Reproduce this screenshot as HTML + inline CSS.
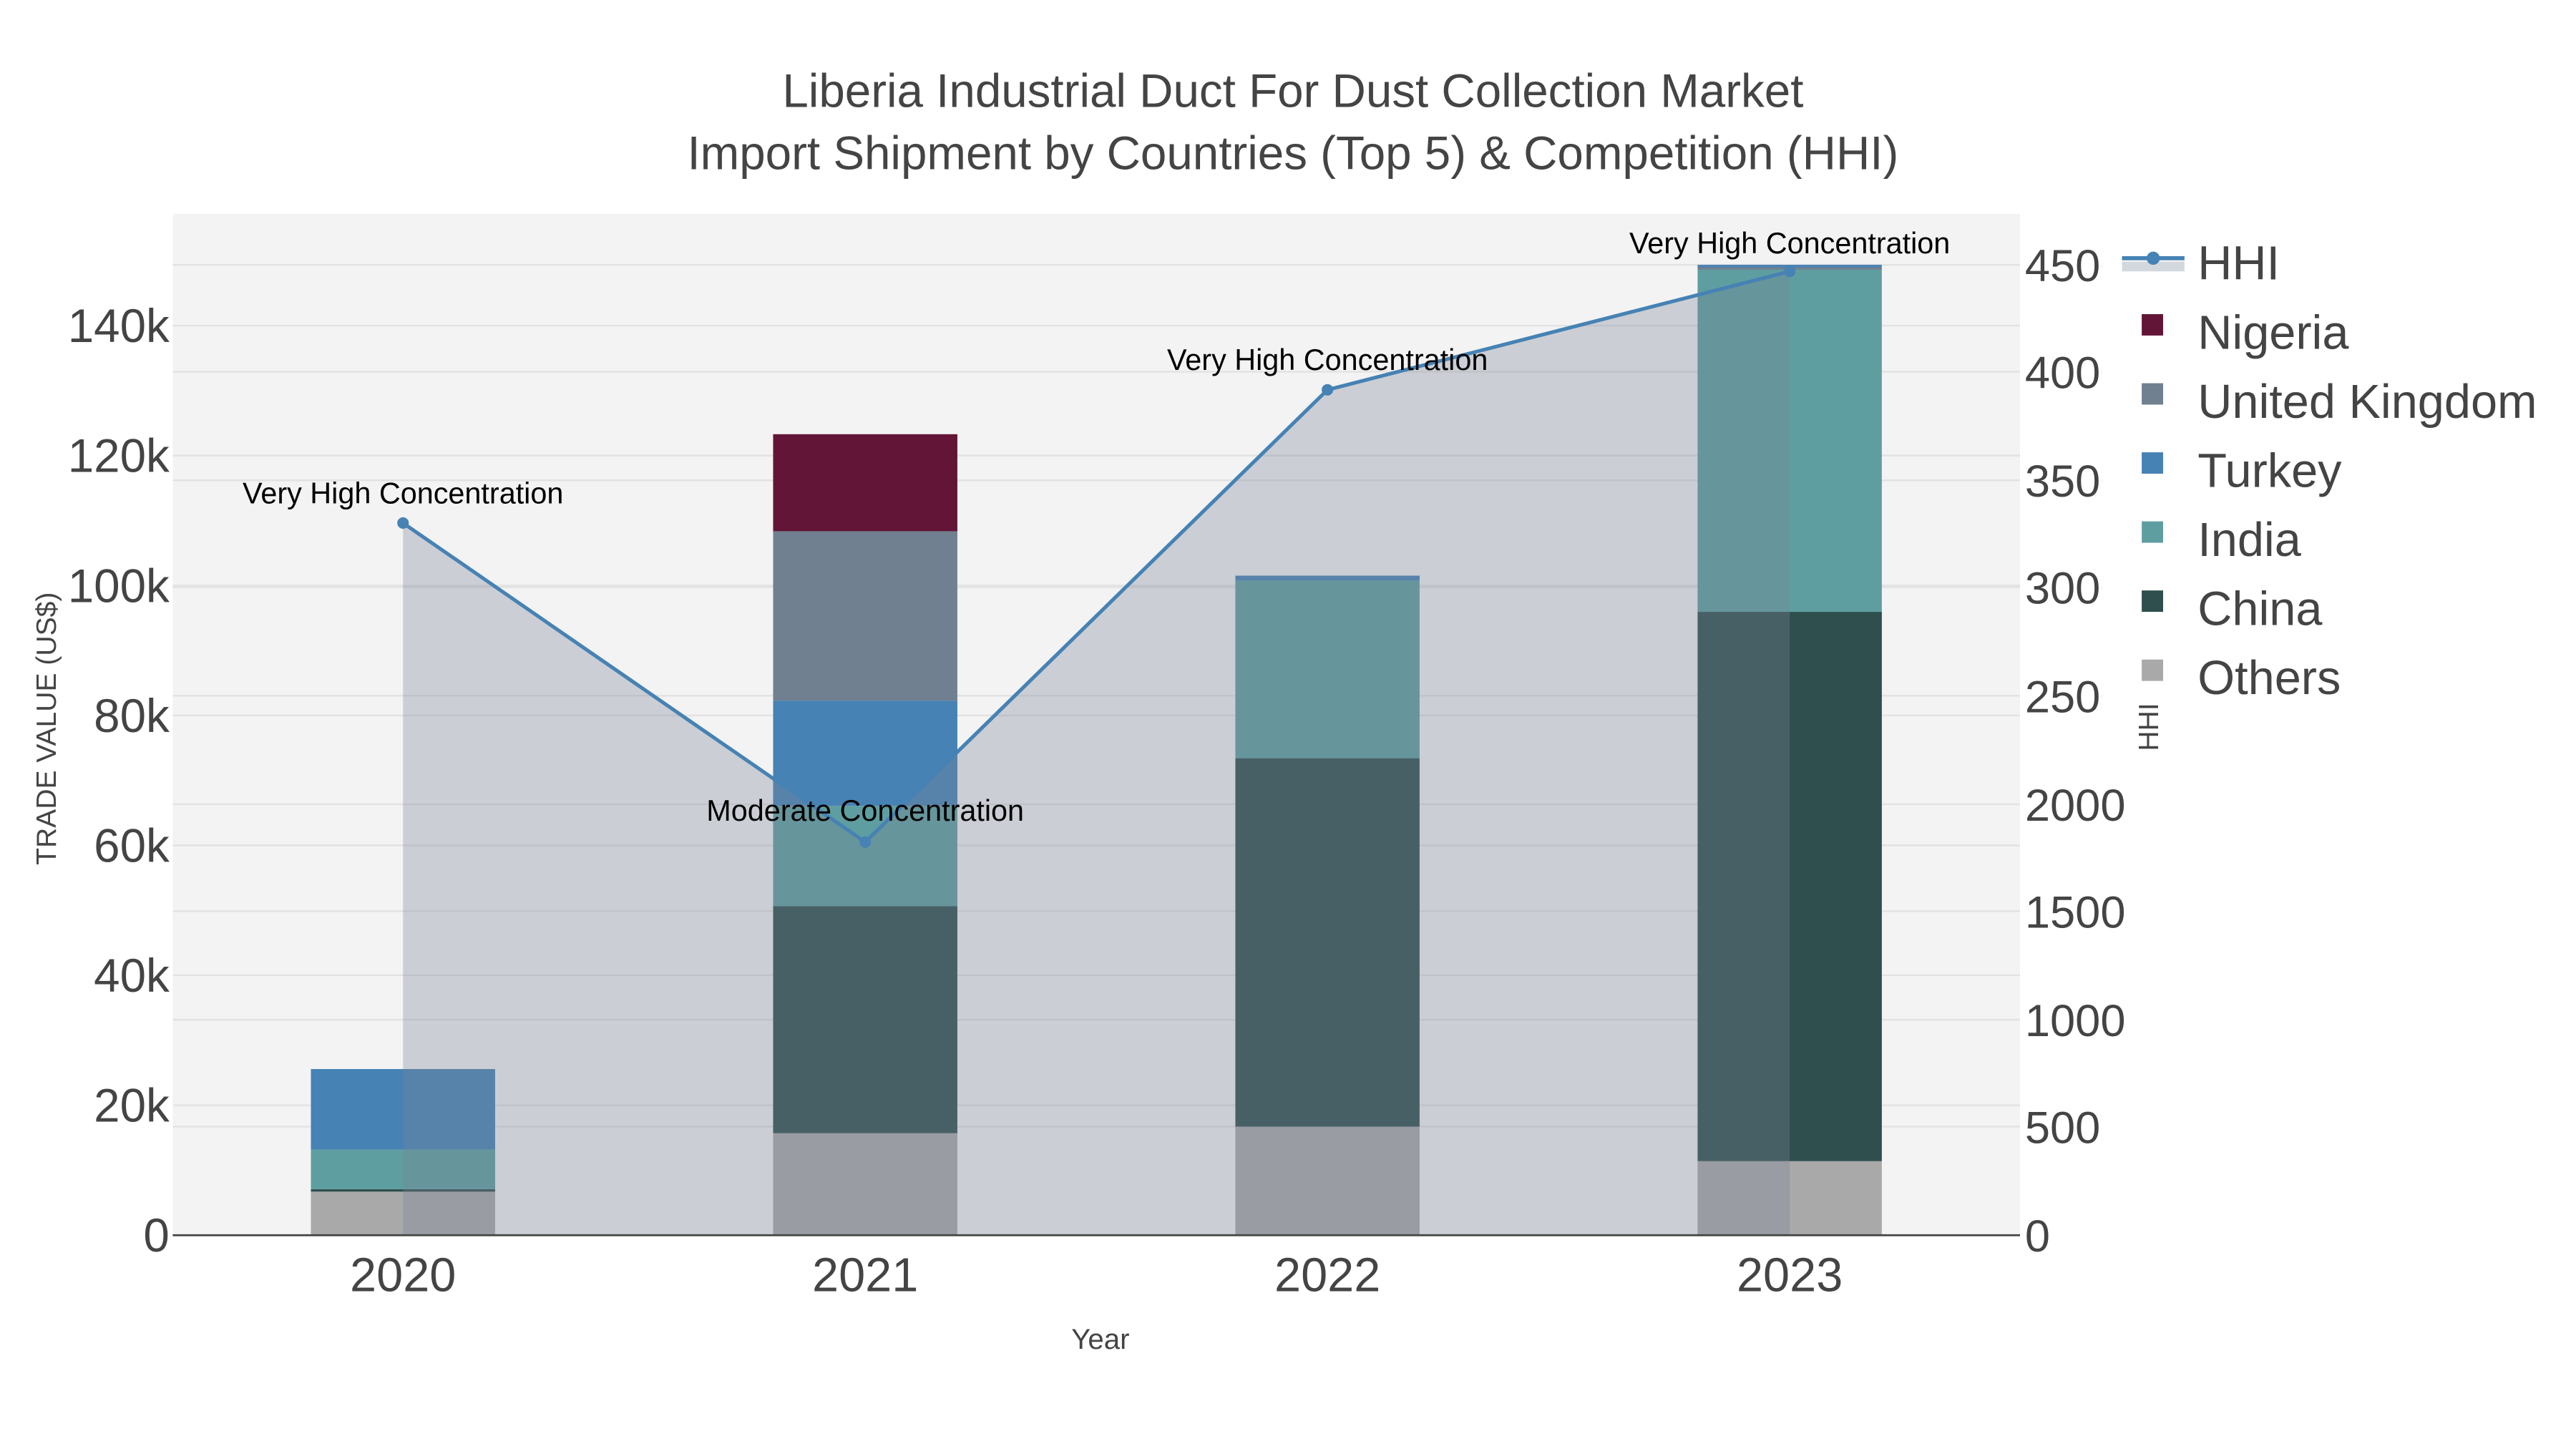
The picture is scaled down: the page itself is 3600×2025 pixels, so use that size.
<!DOCTYPE html>
<html><head><meta charset="utf-8"><style>html,body{margin:0;padding:0;background:#fff;}svg{display:block;}</style></head>
<body>
<svg width="3600" height="2025" viewBox="0 0 1566 881" preserveAspectRatio="none" xmlns="http://www.w3.org/2000/svg" font-family="Liberation Sans, sans-serif">
<rect width="1566" height="881" fill="#fff"/>
<rect x="105" y="130" width="1123" height="621" fill="#f3f3f3"/>
<g stroke="#e2e2e2" stroke-width="1">
<line x1="105" x2="1228" y1="672" y2="672"/><line x1="105" x2="1228" y1="593" y2="593"/><line x1="105" x2="1228" y1="514" y2="514"/><line x1="105" x2="1228" y1="435" y2="435"/><line x1="105" x2="1228" y1="356" y2="356"/><line x1="105" x2="1228" y1="277" y2="277"/><line x1="105" x2="1228" y1="198" y2="198"/>
<line x1="105" x2="1228" y1="685" y2="685"/><line x1="105" x2="1228" y1="620" y2="620"/><line x1="105" x2="1228" y1="554" y2="554"/><line x1="105" x2="1228" y1="489" y2="489"/><line x1="105" x2="1228" y1="423" y2="423"/><line x1="105" x2="1228" y1="357" y2="357"/><line x1="105" x2="1228" y1="292" y2="292"/><line x1="105" x2="1228" y1="226" y2="226"/><line x1="105" x2="1228" y1="161" y2="161"/>
</g>
<g>
<rect x="189" y="724" width="112" height="27" fill="#a9a9a9"/>
<rect x="189" y="723" width="112" height="1.5" fill="#2f4f4f"/>
<rect x="189" y="699" width="112" height="24" fill="#5f9ea0"/>
<rect x="189" y="650" width="112" height="49" fill="#4682b4"/>

<rect x="470" y="689" width="112" height="62" fill="#a9a9a9"/>
<rect x="470" y="551" width="112" height="138" fill="#2f4f4f"/>
<rect x="470" y="490" width="112" height="61" fill="#5f9ea0"/>
<rect x="470" y="426" width="112" height="64" fill="#4682b4"/>
<rect x="470" y="323" width="112" height="103" fill="#708090"/>
<rect x="470" y="264" width="112" height="59" fill="#621536"/>

<rect x="751" y="685" width="112" height="66" fill="#a9a9a9"/>
<rect x="751" y="461" width="112" height="224" fill="#2f4f4f"/>
<rect x="751" y="353" width="112" height="108" fill="#5f9ea0"/>
<rect x="751" y="350" width="112" height="3" fill="#4682b4"/>

<rect x="1032" y="706" width="112" height="45" fill="#a9a9a9"/>
<rect x="1032" y="372" width="112" height="334" fill="#2f4f4f"/>
<rect x="1032" y="164" width="112" height="208" fill="#5f9ea0"/>
<rect x="1032" y="162.5" width="112" height="1.5" fill="#708090"/>
<rect x="1032" y="161" width="112" height="1.5" fill="#4682b4"/>
</g>
<polygon points="245,751 245,318 526,512 807,237 1088,165 1088,751" fill="rgb(120,130,150)" fill-opacity="0.33"/>
<polyline points="245,318 526,512 807,237 1088,165" fill="none" stroke="#4682b4" stroke-width="2.2"/>
<g fill="#4682b4"><circle cx="245" cy="318" r="3.5"/><circle cx="526" cy="512" r="3.5"/><circle cx="807" cy="237" r="3.5"/><circle cx="1088" cy="165" r="3.5"/></g>
<line x1="105" x2="1228" y1="751" y2="751" stroke="#444" stroke-width="1.2"/>
<g font-size="18" fill="#000" text-anchor="middle">
<text x="245" y="306">Very High Concentration</text>
<text x="526" y="499">Moderate Concentration</text>
<text x="807" y="225">Very High Concentration</text>
<text x="1088" y="154">Very High Concentration</text>
</g>
<g font-size="28.5" fill="#444" text-anchor="middle">
<text x="786" y="65">Liberia Industrial Duct For Dust Collection Market</text>
<text x="786" y="103">Import Shipment by Countries (Top 5) &amp; Competition (HHI)</text>
</g>
<g font-size="28.5" fill="#444" text-anchor="end">
<text x="103" y="761">0</text><text x="103" y="682">20k</text><text x="103" y="603">40k</text><text x="103" y="524">60k</text><text x="103" y="445">80k</text><text x="103" y="366">100k</text><text x="103" y="287">120k</text><text x="103" y="208">140k</text>
</g>
<g font-size="27.5" fill="#444">
<text x="1231" y="761">0</text><text x="1231" y="695">500</text><text x="1231" y="630">1000</text><text x="1231" y="564">1500</text><text x="1231" y="499">2000</text><text x="1231" y="433">2500</text><text x="1231" y="367">3000</text><text x="1231" y="302">3500</text><text x="1231" y="236">4000</text><text x="1231" y="171">4500</text>
</g>
<g font-size="29" fill="#444" text-anchor="middle">
<text x="245" y="785">2020</text><text x="526" y="785">2021</text><text x="807" y="785">2022</text><text x="1088" y="785">2023</text>
</g>
<text x="669" y="820" font-size="17.5" fill="#444" text-anchor="middle">Year</text>
<text transform="translate(34,443) rotate(-90)" font-size="17" fill="#444" text-anchor="middle">TRADE VALUE (US$)</text>
<rect x="1278" y="135" width="288" height="300" fill="#fff"/>
<text transform="translate(1312,442) rotate(-90)" font-size="17" fill="#444" text-anchor="middle">HHI</text>
<rect x="1290" y="159" width="38" height="6" fill="#d3d8de"/>
<line x1="1290" x2="1328" y1="157" y2="157" stroke="#4682b4" stroke-width="2.5"/>
<circle cx="1309" cy="157" r="4" fill="#4682b4"/>
<g>
<rect x="1302" y="191" width="13" height="13" fill="#621536"/>
<rect x="1302" y="233" width="13" height="13" fill="#708090"/>
<rect x="1302" y="275" width="13" height="13" fill="#4682b4"/>
<rect x="1302" y="317" width="13" height="13" fill="#5f9ea0"/>
<rect x="1302" y="359" width="13" height="13" fill="#2f4f4f"/>
<rect x="1302" y="401" width="13" height="13" fill="#a9a9a9"/>
</g>
<g font-size="29" fill="#444">
<text x="1336" y="170">HHI</text><text x="1336" y="212">Nigeria</text><text x="1336" y="254">United Kingdom</text><text x="1336" y="296">Turkey</text><text x="1336" y="338">India</text><text x="1336" y="380">China</text><text x="1336" y="422">Others</text>
</g>
</svg>
</body></html>
